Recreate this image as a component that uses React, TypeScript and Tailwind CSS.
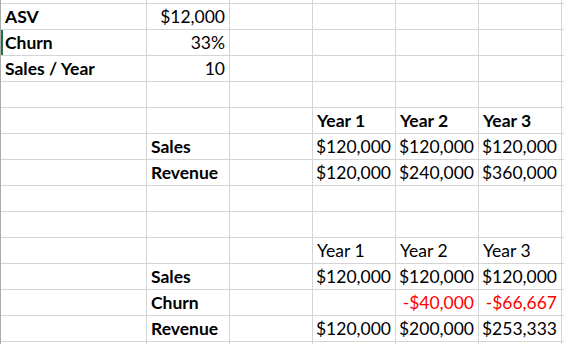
import React from 'react';

type Cell = { t?: string; bold?: boolean; right?: boolean; red?: boolean };

// columns: A, B, C, D, E, F, G(partial)
const rows: Cell[][] = [
  [{ t: 'ASV', bold: true }, { t: '$12,000', right: true }],
  [{ t: 'Churn', bold: true }, { t: '33%', right: true }],
  [{ t: 'Sales / Year', bold: true }, { t: '10', right: true }],
  [],
  [{}, {}, {}, { t: 'Year 1', bold: true }, { t: 'Year 2', bold: true }, { t: 'Year 3', bold: true }],
  [{}, { t: 'Sales', bold: true }, {}, { t: '$120,000', right: true }, { t: '$120,000', right: true }, { t: '$120,000', right: true }],
  [{}, { t: 'Revenue', bold: true }, {}, { t: '$120,000', right: true }, { t: '$240,000', right: true }, { t: '$360,000', right: true }],
  [],
  [],
  [{}, {}, {}, { t: 'Year 1' }, { t: 'Year 2' }, { t: 'Year 3' }],
  [{}, { t: 'Sales', bold: true }, {}, { t: '$120,000', right: true }, { t: '$120,000', right: true }, { t: '$120,000', right: true }],
  [{}, { t: 'Churn', bold: true }, {}, {}, { t: '-$40,000', right: true, red: true }, { t: '-$66,667', right: true, red: true }],
  [{}, { t: 'Revenue', bold: true }, {}, { t: '$120,000', right: true }, { t: '$200,000', right: true }, { t: '$253,333', right: true }],
];

const COLS = 7;

const GridCell: React.FC<{ cell?: Cell }> = ({ cell }) => (
  <div
    className={`bg-white h-[25px] flex items-end pb-[3px] px-[4px] whitespace-nowrap overflow-visible leading-[18px]
      ${cell?.right ? 'justify-end' : 'justify-start'}
      ${cell?.bold ? 'font-bold' : 'font-normal'}
      ${cell?.red ? 'text-[#ff0000]' : 'text-black'}`}
  >
    {cell?.t}
  </div>
);

const App: React.FC = () => {
  return (
    <div className="w-[564px] h-[344px] overflow-hidden bg-white relative font-['Lato','Liberation_Sans',sans-serif] text-[17.5px]">
      {/* left edge of sheet (row headers border) */}
      <div className="flex h-full">
        <div className="w-px shrink-0 bg-[#ababab]" />
        <div className="grid grid-cols-[145px_82px_82px_82px_82px_82px_82px] gap-px bg-[#d4d4d4] content-start">
          {/* partial row above */}
          {Array.from({ length: COLS }).map((_, i) => (
            <div key={`top-${i}`} className="bg-white h-[3px]" />
          ))}
          {rows.map((row, r) =>
            Array.from({ length: COLS }).map((_, c) => <GridCell key={`${r}-${c}`} cell={row[c]} />)
          )}
          {Array.from({ length: COLS }).map((_, i) => (
            <div key={`bot-${i}`} className="bg-white h-[10px]" />
          ))}
        </div>
      </div>

      {/* active row indicator */}
      <div className="absolute left-px top-[30px] w-[2px] h-[25px] bg-[#217346]" />
    </div>
  );
};

export default App;
